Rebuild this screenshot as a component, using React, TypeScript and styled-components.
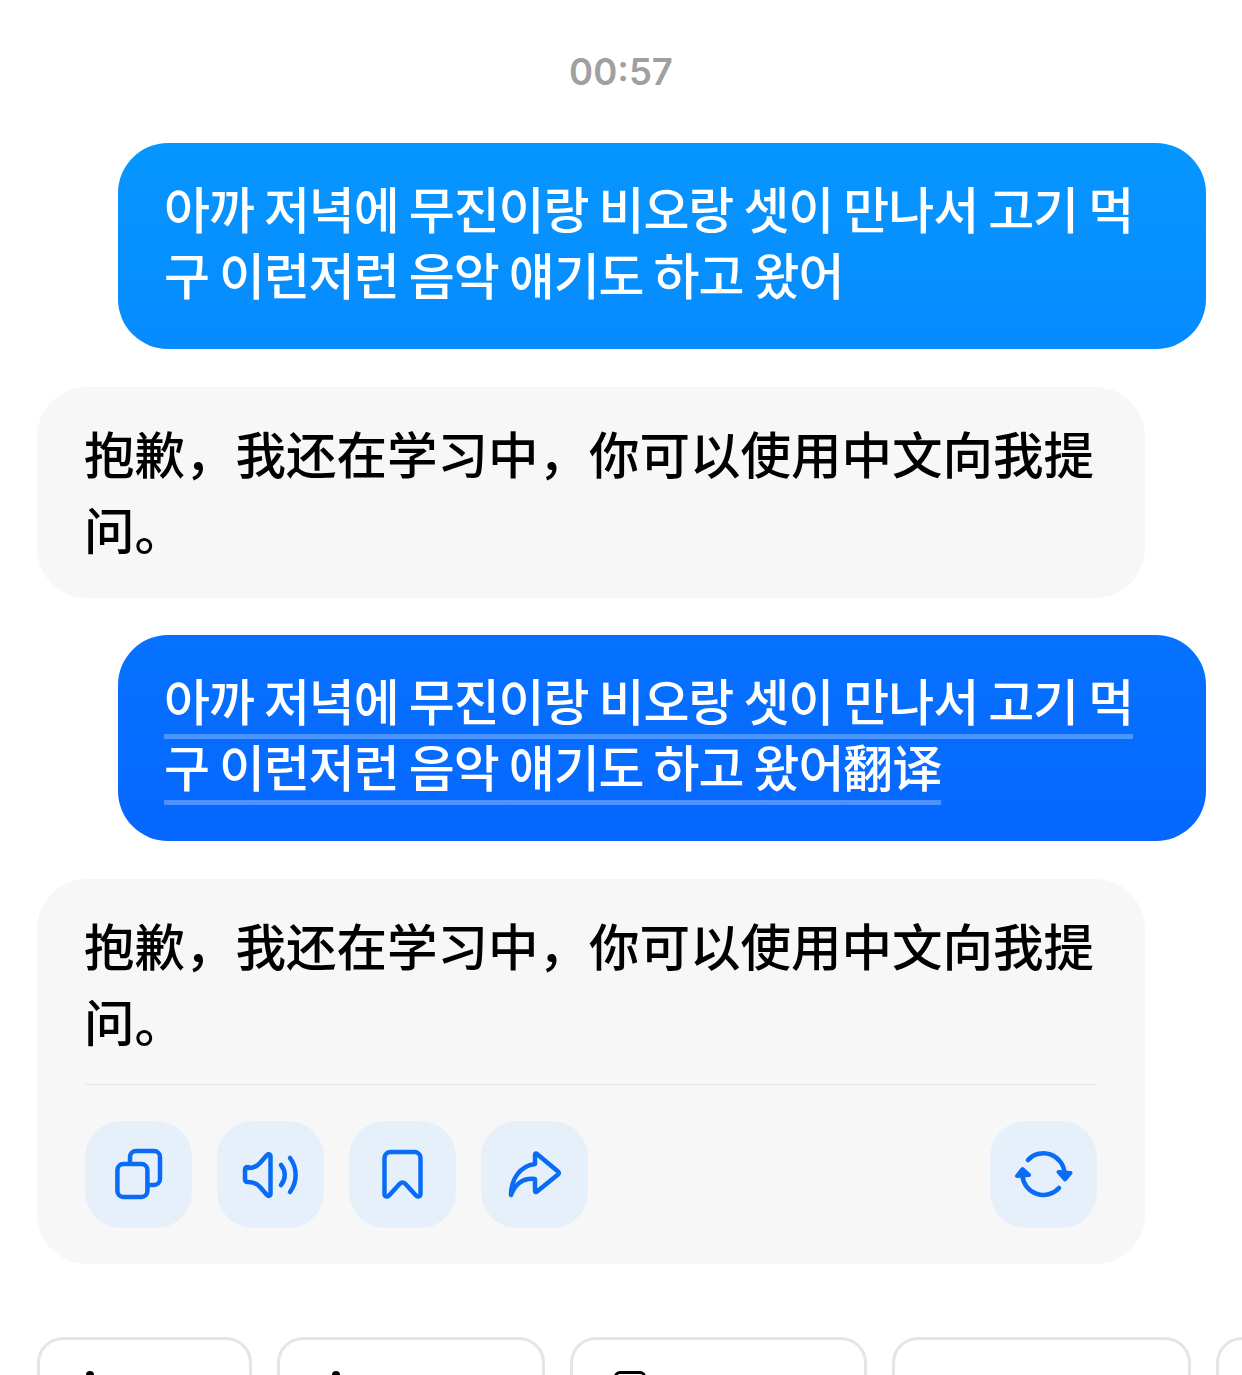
import styled, { createGlobalStyle } from 'styled-components';

const GlobalStyle = createGlobalStyle`
  html,
  body {
    margin: 0;
    height: 1375px;
    overflow: hidden;
    background: #fff;
  }
`;

const KR = `"Noto Sans CJK KR", "Noto Sans", sans-serif`;
const SC = `"Noto Sans CJK SC", "Noto Sans", sans-serif`;

const USER_TEXT = '아까 저녁에 무진이랑 비오랑 셋이 만나서 고기 먹구 이런저런 음악 얘기도 하고 왔어';
const BOT_TEXT = '抱歉，我还在学习中，你可以使用中文向我提问。';

function IconCopy() {
  return (
    <Glyph viewBox="0 0 107 107">
      <rect x="32.4" y="43" width="30" height="33" rx="6" />
      <path d="M45 42v-6a6 6 0 0 1 6-6h18a6 6 0 0 1 6 6v22a6 6 0 0 1-6 6h-6" />
    </Glyph>
  );
}

function IconSound() {
  return (
    <Glyph viewBox="0 0 107 107">
      <path d="M31 47c5 0 9-1.500 12-5l7-8c1.500-1.500 3.500-1 3.500 1.500v37c0 2.500-2 3-3.500 1.500l-7-8c-3-3.500-7-5-12-5c-2 0-3-1-3-3v-9c0-2 1-3 3-3z" />
      <path d="M64 44c5 6 5 14 0 20" />
      <path d="M73 37c7.500 10 7.500 24 0 34" />
    </Glyph>
  );
}

function IconBookmark() {
  return (
    <Glyph viewBox="0 0 107 107">
      <path d="M41.500 31h24a6 6 0 0 1 6 6v36c0 2.500-3 3.500-4.500 1.500l-11-12c-1.500-1.500-3.500-1.500-5 0l-11 12c-1.500 2-4.500 1-4.500-1.500v-36a6 6 0 0 1 6-6z" />
    </Glyph>
  );
}

function IconShare() {
  return (
    <Glyph viewBox="0 0 107 107">
      <path d="M54 34c0-1.500 1-2 2-1l21 17.500c1 1 1 2 0 3l-21 17c-1 1-2 .5-2-1v-11.500c-10-1-19 3-24 16c0-16 9-29 24-31z" />
    </Glyph>
  );
}

function IconRefresh() {
  return (
    <Glyph viewBox="0 0 107 107">
      <path d="M38 39A21 21 0 0 1 74.500 53" />
      <path d="M32.500 55A21 21 0 0 0 69 67" />
      <ArrowHead d="M68.500 51L80.500 52L75 58.500z" />
      <ArrowHead d="M27 55L39 54L32.500 48z" />
    </Glyph>
  );
}

export default function App() {
  return (
    <Page>
      <GlobalStyle />
      <Time>00:57</Time>
      <UserBubble $tone="light">
        <UserText>{USER_TEXT}</UserText>
      </UserBubble>
      <BotBubble>
        <BotText>{BOT_TEXT}</BotText>
      </BotBubble>
      <UserBubble $tone="deep">
        <UserText>
          <Marked>{USER_TEXT}翻译</Marked>
        </UserText>
      </UserBubble>
      <BotBubble $actions>
        <BotText>{BOT_TEXT}</BotText>
        <Divider />
        <Actions>
          <ActionGroup>
            <ActionButton>
              <IconCopy />
            </ActionButton>
            <ActionButton>
              <IconSound />
            </ActionButton>
            <ActionButton>
              <IconBookmark />
            </ActionButton>
            <ActionButton>
              <IconShare />
            </ActionButton>
          </ActionGroup>
          <ActionButton>
            <IconRefresh />
          </ActionButton>
        </Actions>
      </BotBubble>
      <Chips>
        <Chip $width={215}>
          <ChipDot $left={46} />
        </Chip>
        <Chip $width={268}>
          <ChipDot $left={52} />
        </Chip>
        <Chip $width={297}>
          <ChipBar />
        </Chip>
        <Chip $width={299} />
        <Chip $width={120} />
      </Chips>
    </Page>
  );
}

const Page = styled.div`
  display: flex;
  flex-direction: column;
  align-items: flex-start;
  width: 1242px;
  height: 1375px;
  overflow: hidden;
  padding: 50px 0 0 37px;
  box-sizing: border-box;

  & > * {
    flex: none;
  }
`;

const Time = styled.div`
  align-self: stretch;
  margin-left: -37px;
  height: 44px;
  margin-bottom: 49px;
  font-family: Inter, "Liberation Sans", sans-serif;
  font-size: 36.5px;
  font-weight: 600;
  line-height: 44px;
  text-align: center;
  color: #a0a0a0;
`;

const UserBubble = styled.div<{ $tone: 'light' | 'deep' }>`
  box-sizing: border-box;
  width: 1088px;
  height: 206px;
  margin: 0 0 38px 81px;
  padding: 31px 48px 0 46px;
  border-radius: 50px;
  background: ${(props) =>
    props.$tone === 'light'
      ? 'linear-gradient(180deg, #0696ff 0%, #068bff 100%)'
      : 'linear-gradient(180deg, #0672ff 0%, #0667ff 100%)'};
`;

const UserText = styled.div`
  font-family: ${KR};
  font-size: 50px;
  font-weight: 500;
  line-height: 66px;
  letter-spacing: -1.1px;
  word-break: break-all;
  color: #fff;
`;

const Marked = styled.span`
  text-decoration: underline;
  text-decoration-color: rgba(255, 255, 255, 0.28);
  text-decoration-thickness: 5px;
  text-decoration-skip-ink: none;
  text-underline-offset: 13px;
`;

const BotBubble = styled.div<{ $actions?: boolean }>`
  box-sizing: border-box;
  width: 1108px;
  height: ${(props) => (props.$actions ? '385px' : '211px')};
  margin-bottom: 37px;
  padding: 27px 48px 0;
  border-radius: 50px;
  background: #f7f7f7;
`;

const BotText = styled.div`
  margin-left: -1px;
  font-family: ${SC};
  font-size: 50.5px;
  font-weight: 500;
  line-height: 76px;
  word-break: break-all;
  color: #000;
`;

const Divider = styled.div`
  height: 1px;
  margin-top: 26px;
  background: #e3e3e3;
`;

const Actions = styled.div`
  display: flex;
  justify-content: space-between;
  margin-top: 36px;
`;

const ActionGroup = styled.div`
  display: flex;
  gap: 25px;
`;

const ActionButton = styled.div`
  width: 107px;
  height: 107px;
  border-radius: 36px;
  background: #e6f0fb;
`;

const Glyph = styled.svg`
  display: block;
  width: 107px;
  height: 107px;
  fill: none;
  stroke: #0a6cf5;
  stroke-width: 4.5;
  stroke-linecap: round;
  stroke-linejoin: round;
`;

const ArrowHead = styled.path`
  fill: #0a6cf5;
  stroke-width: 4;
`;

const Chips = styled.div`
  display: flex;
  gap: 25px;
  margin-top: 36px;
`;

const Chip = styled.div<{ $width: number }>`
  position: relative;
  flex: none;
  box-sizing: border-box;
  width: ${(props) => props.$width}px;
  height: 80px;
  border: 3px solid #e5e5e5;
  border-radius: 26px;
`;

const ChipDot = styled.div<{ $left: number }>`
  position: absolute;
  top: 31px;
  left: ${(props) => props.$left}px;
  width: 8px;
  height: 8px;
  border-radius: 50%;
  background: #000;
`;

const ChipBar = styled.div`
  position: absolute;
  top: 31px;
  left: 41px;
  width: 32px;
  height: 12px;
  border: 3px solid #000;
  border-radius: 7px;
  box-sizing: border-box;
`;
